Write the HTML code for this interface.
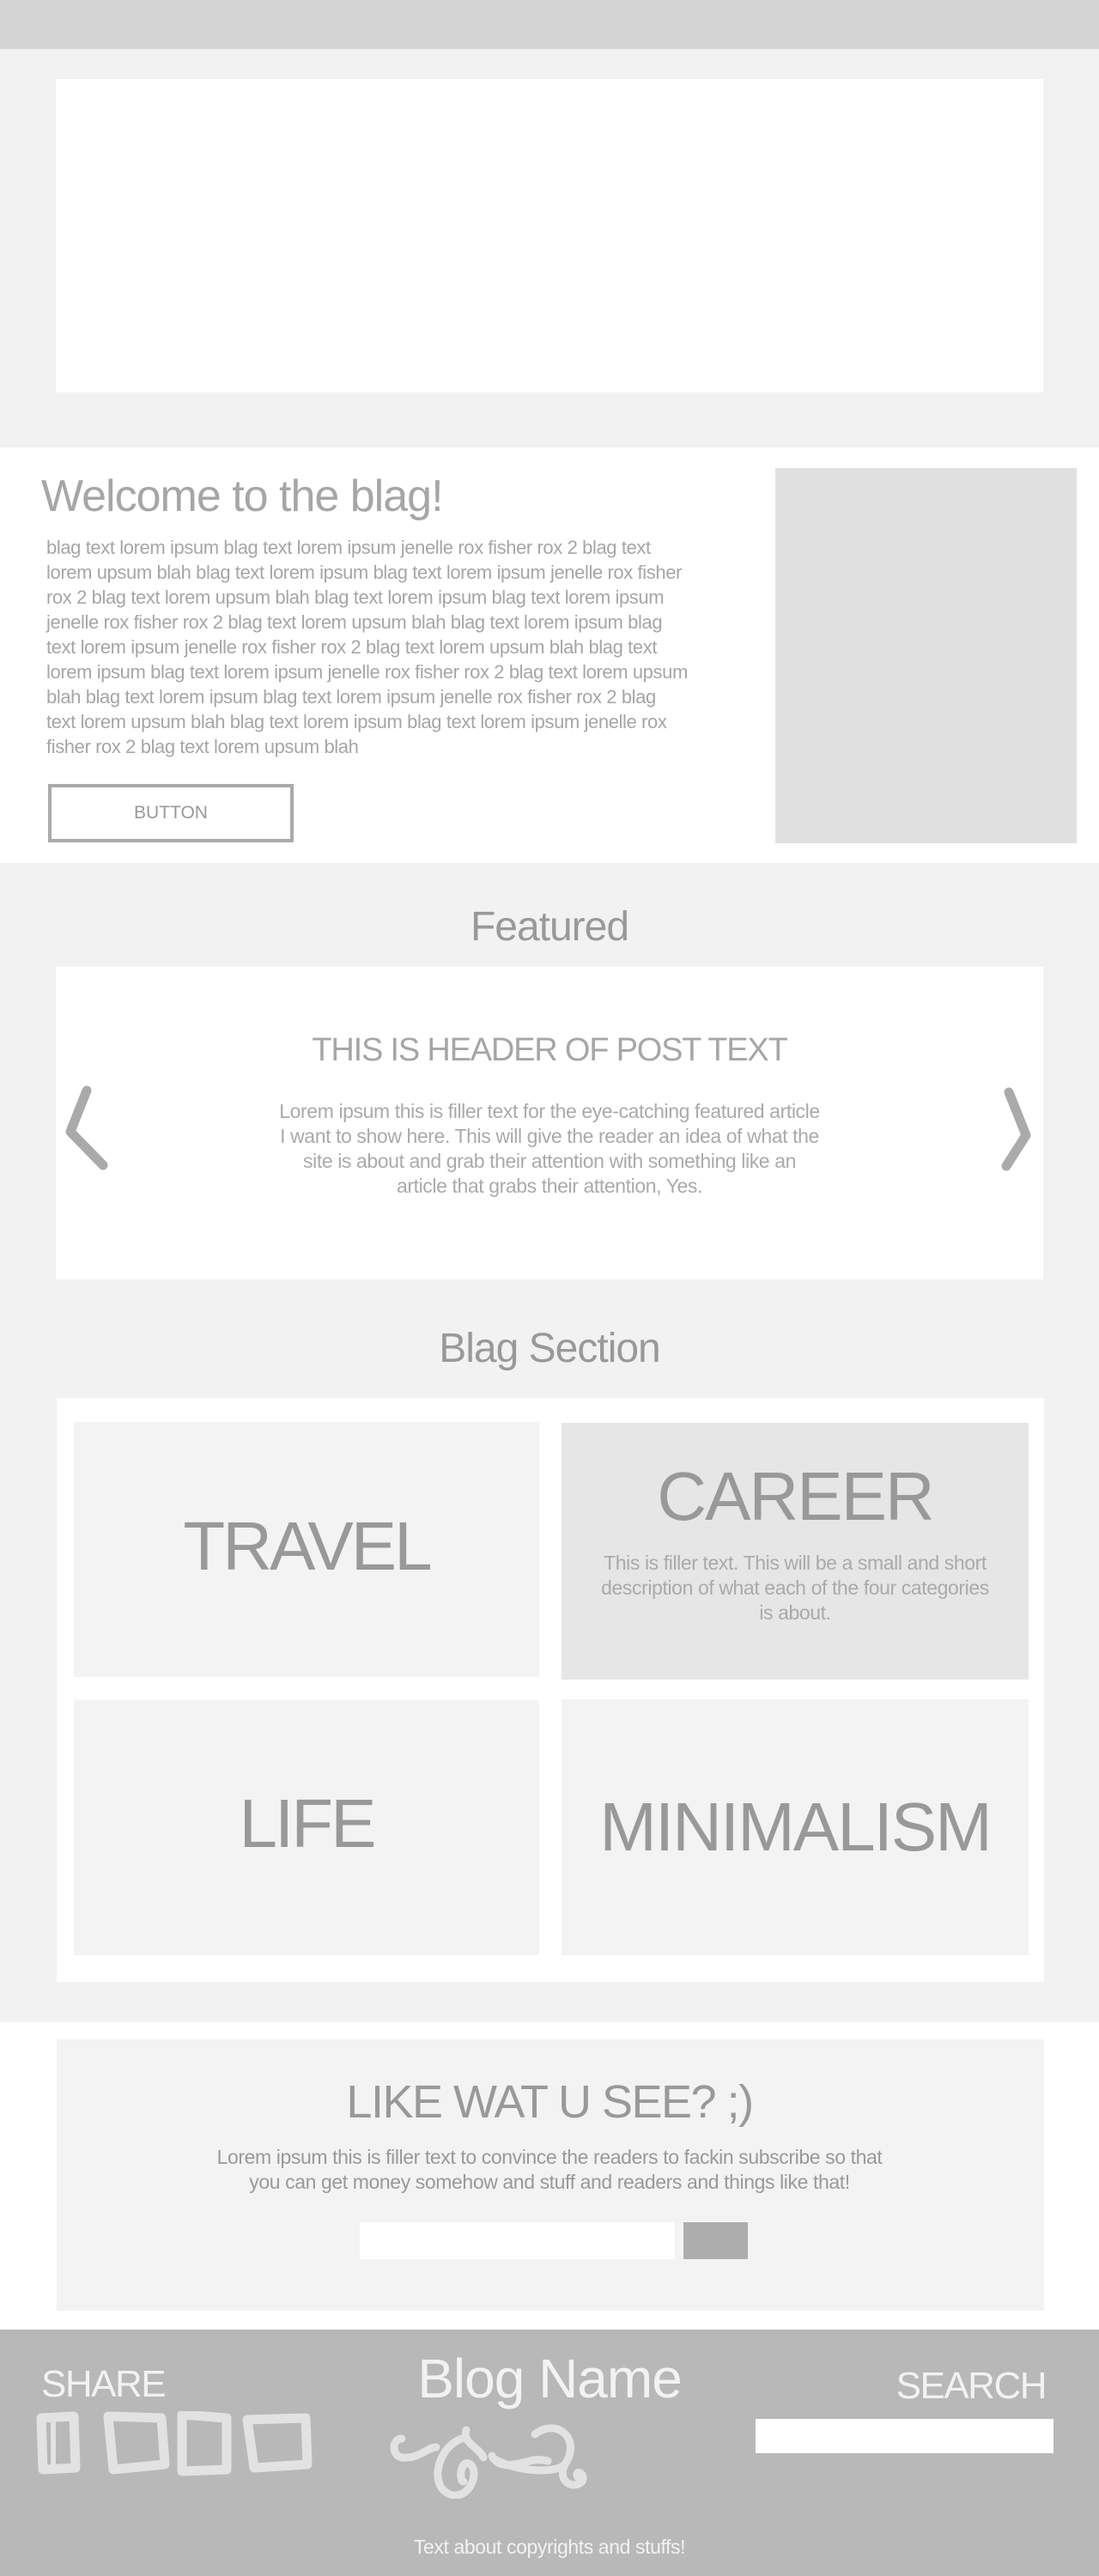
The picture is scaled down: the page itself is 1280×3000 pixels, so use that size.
<!DOCTYPE html>
<html><head><meta charset="utf-8"><style>
*{margin:0;padding:0;box-sizing:border-box}
body{width:1280px;height:3000px;position:relative;background:#fff;font-family:"Liberation Sans Narrow","Liberation Sans",sans-serif;overflow:hidden}
.a{position:absolute}
.t{white-space:nowrap;letter-spacing:-0.4px}
.c{text-align:center;left:0;width:1280px}
</style></head><body>
<div class="a" style="left:0;top:0;width:1280px;height:57px;background:#d4d4d4"></div>
<div class="a" style="left:0;top:57px;width:1280px;height:464px;background:#f2f2f2"></div>
<div class="a" style="left:65px;top:92px;width:1150px;height:365px;background:#fff"></div>

<div class="a t" style="left:48px;top:548px;font-size:52px;color:#a6a6a6;letter-spacing:-1px">Welcome to the blag!</div>
<div class="a t" style="left:54px;top:623px;font-size:22px;line-height:29px;color:#a6a6a6">blag text lorem ipsum blag text lorem ipsum jenelle rox fisher rox 2 blag text<br>lorem upsum blah blag text lorem ipsum blag text lorem ipsum jenelle rox fisher<br>rox 2 blag text lorem upsum blah blag text lorem ipsum blag text lorem ipsum<br>jenelle rox fisher rox 2 blag text lorem upsum blah blag text lorem ipsum blag<br>text lorem ipsum jenelle rox fisher rox 2 blag text lorem upsum blah blag text<br>lorem ipsum blag text lorem ipsum jenelle rox fisher rox 2 blag text lorem upsum<br>blah blag text lorem ipsum blag text lorem ipsum jenelle rox fisher rox 2 blag<br>text lorem upsum blah blag text lorem ipsum blag text lorem ipsum jenelle rox<br>fisher rox 2 blag text lorem upsum blah</div>
<div class="a" style="left:56px;top:913px;width:286px;height:68px;border:4px solid #aaa;color:#999;font-size:21px;text-align:center;line-height:60px">BUTTON</div>
<div class="a" style="left:903px;top:545px;width:351px;height:437px;background:#e0e0e0"></div>

<div class="a" style="left:0;top:1005px;width:1280px;height:1350px;background:#f2f2f2"></div>
<div class="a t c" style="top:1052px;font-size:48px;color:#999;letter-spacing:-1px">Featured</div>
<div class="a" style="left:65px;top:1126px;width:1150px;height:364px;background:#fff"></div>
<div class="a t c" style="top:1202px;font-size:38px;color:#a6a6a6;letter-spacing:-1.2px">THIS IS HEADER OF POST TEXT</div>
<div class="a t c" style="top:1280px;font-size:23px;line-height:29px;color:#aaa">Lorem ipsum this is filler text for the eye-catching featured article<br>I want to show here. This will give the reader an idea of what the<br>site is about and grab their attention with something like an<br>article that grabs their attention, Yes.</div>
<svg class="a" style="left:70px;top:1260px" width="60" height="110"><path d="M31 10 L12 58 L50 97" stroke="#aaa" stroke-width="11" fill="none" stroke-linecap="round" stroke-linejoin="round"/></svg>
<svg class="a" style="left:1155px;top:1262px" width="60" height="110"><path d="M20 10 L40 60 L17 96" stroke="#aaa" stroke-width="11" fill="none" stroke-linecap="round" stroke-linejoin="round"/></svg>

<div class="a t c" style="top:1543px;font-size:48px;color:#999;letter-spacing:-1px">Blag Section</div>
<div class="a" style="left:66px;top:1628px;width:1150px;height:680px;background:#fff"></div>
<div class="a" style="left:86px;top:1656px;width:542px;height:297px;background:#f3f3f3"></div>
<div class="a" style="left:654px;top:1657px;width:544px;height:299px;background:#e6e6e6"></div>
<div class="a" style="left:86px;top:1980px;width:542px;height:297px;background:#f3f3f3"></div>
<div class="a" style="left:654px;top:1979px;width:544px;height:298px;background:#f3f3f3"></div>
<div class="a t" style="left:86px;width:542px;text-align:center;top:1755px;font-size:80px;color:#999;letter-spacing:-3px">TRAVEL</div>
<div class="a t" style="left:654px;width:544px;text-align:center;top:1697px;font-size:80px;color:#999;letter-spacing:-2px">CAREER</div>
<div class="a t" style="left:654px;width:544px;text-align:center;top:1806px;font-size:23px;line-height:29px;color:#aaa">This is filler text. This will be a small and short<br>description of what each of the four categories<br>is about.</div>
<div class="a t" style="left:86px;width:542px;text-align:center;top:2078px;font-size:80px;color:#999;letter-spacing:-3px">LIFE</div>
<div class="a t" style="left:654px;width:544px;text-align:center;top:2082px;font-size:80px;color:#999;letter-spacing:-2px">MINIMALISM</div>

<div class="a" style="left:66px;top:2375px;width:1150px;height:316px;background:#f3f3f3"></div>
<div class="a t c" style="top:2417px;font-size:54px;color:#999;letter-spacing:-1.5px">LIKE WAT U SEE? ;)</div>
<div class="a t c" style="top:2498px;font-size:23px;line-height:29px;color:#999">Lorem ipsum this is filler text to convince the readers to fackin subscribe so that<br>you can get money somehow and stuff and readers and things like that!</div>
<div class="a" style="left:419px;top:2588px;width:367px;height:43px;background:#fff"></div>
<div class="a" style="left:796px;top:2588px;width:75px;height:43px;background:#adadad"></div>

<div class="a" style="left:0;top:2713px;width:1280px;height:287px;background:#b8b8b8"></div>
<div class="a t" style="left:48px;top:2752px;font-size:44px;color:#f2f2f2;letter-spacing:-1.5px">SHARE</div>
<div class="a t c" style="top:2733px;font-size:64px;color:#f2f2f2;letter-spacing:-1px">Blog Name</div>
<div class="a t" style="right:62px;top:2754px;font-size:44px;color:#f2f2f2;letter-spacing:-1.5px">SEARCH</div>
<div class="a" style="left:880px;top:2817px;width:347px;height:40px;background:#fff"></div>
<svg class="a" style="left:40px;top:2808px" width="330" height="90">
<g fill="none" stroke="#e2e2e2" stroke-width="11" stroke-linejoin="round">
<path d="M8 8 L46 6 L48 66 L10 68 Z"/><path d="M22 12 L22 62" stroke-width="6"/>
<path d="M86 6 L148 8 L152 62 L92 68 Z"/>
<path d="M172 4 L224 8 L224 68 L172 70 Z"/>
<path d="M248 10 L316 8 L318 62 L256 66 Z"/>
</g>
</svg>
<svg class="a" style="left:448px;top:2810px" width="310" height="100">
<g fill="none" stroke="#e2e2e2" stroke-width="9" stroke-linecap="round">
<path d="M20 30 C8 30 8 50 20 52 C40 54 50 40 60 40"/>
<path d="M90 30 C60 40 50 90 80 96 C100 98 110 70 100 60 C88 52 86 80 92 80"/>
<path d="M95 20 C90 35 110 40 115 52"/>
<path d="M125 50 C130 60 140 62 150 60 C170 58 170 52 190 56"/>
<path d="M175 25 C200 5 230 30 210 60 C200 80 220 90 230 80 C235 70 220 65 225 75"/>
<path d="M130 55 C160 70 200 70 210 60"/>
</g></svg>
<div class="a t c" style="top:2953px;font-size:23px;color:#f2f2f2">Text about copyrights and stuffs!</div>
</body></html>
